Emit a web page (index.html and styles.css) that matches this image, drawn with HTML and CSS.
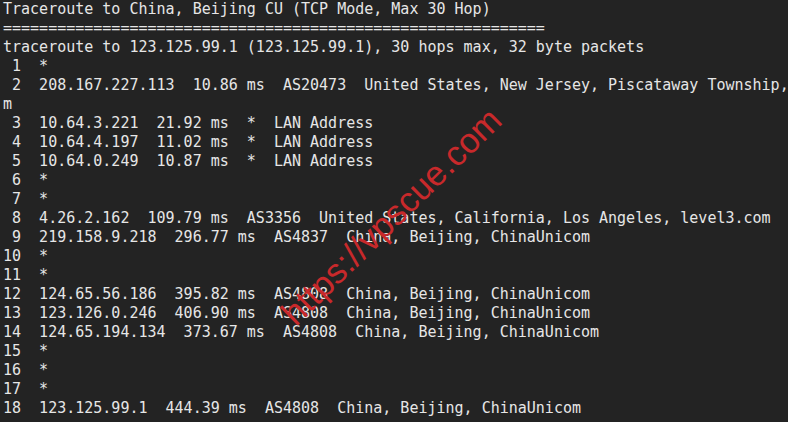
FILE: index.html
```html
<!DOCTYPE html>
<html lang="en">
  <head>
    <meta charset="utf-8">
    <title>Traceroute to China, Beijing CU</title>
    <link rel="stylesheet" href="styles.css">
  </head>
  <body>
    <div id="term">
<pre class="out">Traceroute to China, Beijing CU (TCP Mode, Max 30 Hop)
============================================================
traceroute to 123.125.99.1 (123.125.99.1), 30 hops max, 32 byte packets
 1  *
 2  208.167.227.113  10.86 ms  AS20473  United States, New Jersey, Piscataway Township,
m
 3  10.64.3.221  21.92 ms  *  LAN Address
 4  10.64.4.197  11.02 ms  *  LAN Address
 5  10.64.0.249  10.87 ms  *  LAN Address
 6  *
 7  *
 8  4.26.2.162  109.79 ms  AS3356  United States, California, Los Angeles, level3.com
 9  219.158.9.218  296.77 ms  AS4837  China, Beijing, ChinaUnicom
10  *
11  *
12  124.65.56.186  395.82 ms  AS4808  China, Beijing, ChinaUnicom
13  123.126.0.246  406.90 ms  AS4808  China, Beijing, ChinaUnicom
14  124.65.194.134  373.67 ms  AS4808  China, Beijing, ChinaUnicom
15  *
16  *
17  *
18  123.125.99.1  444.39 ms  AS4808  China, Beijing, ChinaUnicom</pre>
      <span class="mark">https://vpscue.com</span>
    </div>
  </body>
</html>
```

FILE: styles.css
```css
* {
	margin:0;
	padding:0;
	box-sizing:border-box;
}

html, body {width:788px;height:422px;overflow:hidden;background:#232323;}
#term {position:relative;width:788px;height:422px;overflow:hidden;}

/* terminal output */
.out {
	padding:0 0 0 3px;
	color:#e6e6e6;
	font-family:"DejaVu Sans Mono",monospace;
	font-size:15px;
	line-height:19px;
	white-space:pre;
}

/* watermark */
.mark {
	position:absolute;
	left:391px;
	top:216px;
	transform:translate(-50%,-50%) rotate(-44.5deg);
	color:#c8292b;
	font-family:"Liberation Sans",Arial,sans-serif;
	font-size:35px;
	line-height:1;
	white-space:nowrap;
}
```
